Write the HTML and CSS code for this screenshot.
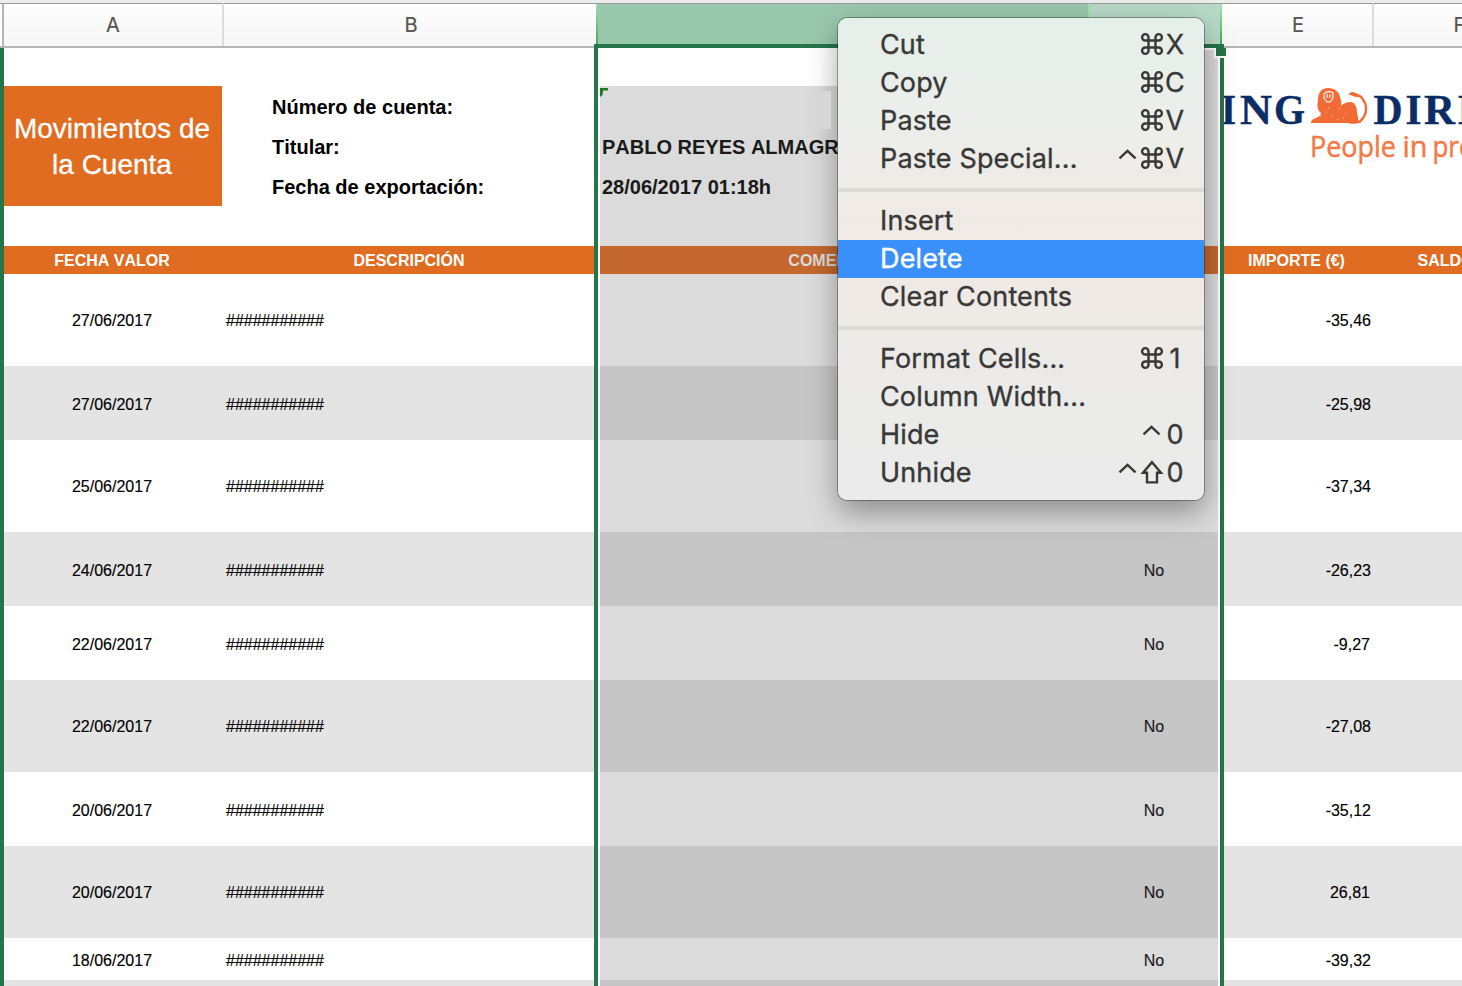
FILE: index.html
```
<!DOCTYPE html>
<html lang="es">
<head>
<meta charset="utf-8">
<title>Movimientos de la Cuenta</title>
<link rel="stylesheet" href="styles.css">
</head>
<body>
<svg class="defs" width="0" height="0" aria-hidden="true">
  <symbol id="cmd" viewBox="0 0 24 24"><path d="M8.5 8.5h7v7h-7zM8.5 8.5H5.3A3.2 3.2 0 1 1 8.5 5.3zM15.5 8.5V5.3a3.2 3.2 0 1 1 3.2 3.2zM15.5 15.5h3.2a3.2 3.2 0 1 1-3.2 3.2zM8.5 15.5v3.2a3.2 3.2 0 1 1-3.2-3.2z"/></symbol>
  <symbol id="ctrl" viewBox="0 0 24 24"><path d="M3.5 12.4L11.5 4.8L19.5 12.4"/></symbol>
  <symbol id="shift" viewBox="0 0 24 24"><path d="M12 2.2L21 12.8H17V22.4H7V12.8H3Z"/></symbol>
</svg>
<div class="sheet">
  <div class="colheads">
    <div class="corner"></div>
    <div class="ch ch-a">A</div>
    <div class="ch ch-b">B</div>
    <div class="ch ch-c"></div>
    <div class="ch ch-d"></div>
    <div class="ch ch-e">E</div>
    <div class="ch ch-f">F</div>
  </div>
  <div class="top cols">
    <div class="title">Movimientos de<br>la Cuenta</div>
    <div class="labels"><span>Número de cuenta:</span><span>Titular:</span><span>Fecha de exportación:</span></div>
    <div class="topsel">
      <div class="owner"><i class="flag"></i><span>&nbsp;</span><span>PABLO REYES ALMAGRO</span><span>28/06/2017 01:18h</span></div>
      <div class="topd"></div>
    </div>
    <svg class="logo" width="240" height="198" viewBox="1222 48 240 198">
      <g class="brand">
        <text x="1221" y="123.5" textLength="15" lengthAdjust="spacingAndGlyphs">I</text>
        <text x="1240" y="123.5" textLength="32" lengthAdjust="spacingAndGlyphs">N</text>
        <text x="1274" y="123.5" textLength="31" lengthAdjust="spacingAndGlyphs">G</text>
        <text x="1373.5" y="123.5" textLength="29" lengthAdjust="spacingAndGlyphs">D</text>
        <text x="1405.5" y="123.5" textLength="16" lengthAdjust="spacingAndGlyphs">I</text>
        <text x="1424" y="123.5" textLength="31" lengthAdjust="spacingAndGlyphs">R</text>
        <text x="1458" y="123.5" textLength="27" lengthAdjust="spacingAndGlyphs">E</text>
      </g>
      <path class="lion" d="M1311 123c0-3 2-4 5-5 3-1 5-3 5-5-4-3-4-8-3-13 0-8 4-12 10-12 7 0 11 4 12 9 1 3 2 6 1 9 3-3 6-4 9-4 5 0 7 5 7 10 0 3 2 6 1 9h3v2z"/>
      <path class="tail" d="M1353 94.500c5 0 8 1 10 5 4 5 4 12 1 17-2 4-5 6-9 6h-5"/>
      <path class="tuft" d="M1349 95c0-3 4-4 6-2l5 3-3 1c-3 0-5-2-8-2z"/>
      <path class="face" d="M1324 94c2-3 7-3 9-1v5l-3 4h-3l-3-4zM1327 94v4M1330 94v4"/>
      <path class="mane" d="M1320 116h2M1325 112h2M1331 117l2-1M1338 109l2-1M1337 119h2M1345 113l2 1M1342 118h2M1328 108h2"/>
      <text class="tag" x="1310" y="157" textLength="86" lengthAdjust="spacingAndGlyphs">People</text>
      <text class="tag" x="1402.5" y="157" textLength="25" lengthAdjust="spacingAndGlyphs">in</text>
      <text class="tag" x="1432.5" y="157" textLength="42" lengthAdjust="spacingAndGlyphs">pro</text>
    </svg>
  </div>
  <div class="heading cols"><div>FECHA VALOR</div><div>DESCRIPCIÓN</div><div class="sel"><b class="com">COMENTARIO</b><b></b></div><div class="imp">IMPORTE (€)</div><div class="saldo">SALDO (€)</div></div>
  <div class="row h92 cols"><div>27/06/2017</div><div class="desc">###########</div><div class="sel"><span></span><span>No</span></div><div class="amt">-35,46</div><div></div></div>
  <div class="row h74 alt cols"><div>27/06/2017</div><div class="desc">###########</div><div class="sel"><span></span><span>No</span></div><div class="amt">-25,98</div><div></div></div>
  <div class="row h92 cols"><div>25/06/2017</div><div class="desc">###########</div><div class="sel"><span></span><span>No</span></div><div class="amt">-37,34</div><div></div></div>
  <div class="row h74 alt cols"><div>24/06/2017</div><div class="desc">###########</div><div class="sel"><span></span><span>No</span></div><div class="amt">-26,23</div><div></div></div>
  <div class="row h74 cols"><div>22/06/2017</div><div class="desc">###########</div><div class="sel"><span></span><span>No</span></div><div class="amt pos">-9,27</div><div></div></div>
  <div class="row h92 alt cols"><div>22/06/2017</div><div class="desc">###########</div><div class="sel"><span></span><span>No</span></div><div class="amt">-27,08</div><div></div></div>
  <div class="row h74 cols"><div>20/06/2017</div><div class="desc">###########</div><div class="sel"><span></span><span>No</span></div><div class="amt">-35,12</div><div></div></div>
  <div class="row h92 alt cols"><div>20/06/2017</div><div class="desc">###########</div><div class="sel"><span></span><span>No</span></div><div class="amt pos">26,81</div><div></div></div>
  <div class="row h42 cols"><div>18/06/2017</div><div class="desc">###########</div><div class="sel"><span></span><span>No</span></div><div class="amt">-39,32</div><div></div></div>
  <div class="row h6 alt cols"><div></div><div></div><div class="sel"></div><div></div><div></div></div>

  <div class="edge"></div>
  <div class="selection"></div>
  <div class="handle"></div>
  <div class="menu">
    <div class="item"><span>Cut</span><kbd><svg><use href="#cmd"/></svg><em>X</em></kbd></div>
    <div class="item"><span>Copy</span><kbd><svg><use href="#cmd"/></svg><em>C</em></kbd></div>
    <div class="item"><span>Paste</span><kbd><svg><use href="#cmd"/></svg><em>V</em></kbd></div>
    <div class="item"><span>Paste Special...</span><kbd><svg><use href="#ctrl"/></svg><svg><use href="#cmd"/></svg><em>V</em></kbd></div>
    <hr>
    <div class="item"><span>Insert</span></div>
    <div class="item active"><span>Delete</span></div>
    <div class="item"><span>Clear Contents</span></div>
    <hr>
    <div class="item"><span>Format Cells...</span><kbd><svg><use href="#cmd"/></svg><em>1</em></kbd></div>
    <div class="item"><span>Column Width...</span></div>
    <div class="item"><span>Hide</span><kbd><svg><use href="#ctrl"/></svg><em>0</em></kbd></div>
    <div class="item"><span>Unhide</span><kbd><svg><use href="#ctrl"/></svg><svg><use href="#shift"/></svg><em>0</em></kbd></div>
  </div>
  <div class="patch"></div>
</div>
</body>
</html>
```
FILE: styles.css
```
* { box-sizing: border-box; }
body { margin: 0; background: #fff; font-family: "Liberation Sans", Arial, sans-serif; font-kerning: none; overflow: hidden; }
.defs { position: absolute; }
.sheet { position: relative; width: 1462px; height: 986px; overflow: hidden; }

.colheads { display: flex; height: 48px; border-top: 3px solid #ececec; border-bottom: 2px solid #b5b5b5; background: linear-gradient(#999 1px, #fdfdfd 1px, #f6f6f6); }
.corner { flex: none; width: 4px; background: #fff; border-right: 2px solid #b5b5b5; border-top: 1px solid #999; }
.ch { flex: none; height: 43px; border-top: 1px solid #999; border-right: 2px solid #dcdcdc; font: 20px/42px "Inter", sans-serif; color: #555; text-align: center; -webkit-text-stroke: .2px; }
.ch-a { width: 220px; }
.ch-b { width: 374px; border-right: 0; }
.ch-c { width: 494px; border-right-color: #9fdfae; background: linear-gradient(90deg, transparent 2px, #9ac8ad 2px), linear-gradient(#a5dcb0, #3da850); margin-left: -2px; }
.ch-d { width: 132px; border-right: 0; background: linear-gradient(90deg, #b8d9c8 130px, transparent 130px), linear-gradient(#a5e6ae, #3da850); }
.ch-e { width: 152px; padding-left: 2px; }
.ch-f { width: 173px; }

.cols { display: grid; grid-template-columns: 218px 376px 626px 150px 92px; padding-left: 4px; }
.cols > .sel { margin: 0 4px 0 2px; }
.top { height: 198px; grid-template-columns: 218px 376px 620px 244px; }
.title { margin-top: 38px; height: 120px; padding: 25px 2px 0 0; background: #e06c22; color: #fff; font-size: 28px; line-height: 36px; text-align: center; -webkit-text-stroke: .3px; }
.labels { display: flex; flex-direction: column; padding: 39px 0 0 50px; font-weight: bold; font-size: 20px; line-height: 40px; color: #000; }
.topsel { display: flex; margin: 0 0 0 2px; width: 618px; }
.owner { position: relative; width: 490px; margin-top: 38px; background: #dbdbdb; padding: 1px 2px; display: flex; flex-direction: column; font-weight: bold; font-size: 20px; line-height: 40px; color: #1a1a1a; }
.flag { position: absolute; left: 0; top: 2px; width: 8px; height: 9px; background: #1f7a25; clip-path: polygon(0 0, 100% 0, 100% 28%, 40% 28%, 30% 80%, 0 100%); }
.topd { width: 128px; margin-top: 2px; background: #dbdbdb; }
.logo { margin-left: 4px; }
.brand { font: bold 42px "Liberation Serif", serif; fill: #0c2c66; stroke: #0c2c66; stroke-width: .4; }
.lion, .tuft { fill: #f26a35; }
.tail { fill: none; stroke: #f26a35; stroke-width: 2.4; }
.face { fill: none; stroke: #fff; stroke-width: 1.1; }
.mane { fill: none; stroke: #f9a783; stroke-width: 1; }
.tag { font: 29px "Open Sans", sans-serif; fill: #f27a48; stroke: #f27a48; stroke-width: .5; }

.heading { height: 28px; background: #e06c22; color: #fff; font: bold 16px/29px "Liberation Sans", sans-serif; font-kerning: none; text-align: center; }
.sel { display: grid; grid-template-columns: 490px 128px; }
.heading .sel { background: #c4682f; color: #dbdbdb; }
.heading .com { padding-right: 4px; }
.heading .imp { padding-right: 5px; }
.heading > div:nth-child(1) { padding-right: 2px; }
.heading > div:nth-child(2) { padding-right: 2px; }
.heading .saldo { text-align: left; padding-left: 43.5px; white-space: nowrap; }
.row { font-size: 16px; color: #000; text-align: center; -webkit-text-stroke: .15px; }
.row > div:first-child { padding-right: 2px; }
.row.alt { background: #e4e4e4; }
.row .sel { background: #dbdbdb; color: #1a1a1a; }
.row.alt .sel { background: #c6c6c6; }
.row .desc { text-align: left; padding-left: 4px; }
.row .amt { text-align: right; padding-right: 3px; }
.row .pos { padding-right: 4px; }
.h92 { height: 92px; line-height: 93px; }
.h74 { height: 74px; line-height: 77px; }
.h42 { height: 42px; line-height: 45px; }
.h6 { height: 6px; }

.edge { position: absolute; left: 0; top: 48px; width: 4px; height: 938px; background: #26744a; }
.selection { position: absolute; left: 594px; top: 44px; width: 630px; height: 950px; border: 4px solid #26744a; box-shadow: inset 2px 0 #fff, inset -2px 0 #fff; }
.handle { position: absolute; left: 1216px; top: 48px; width: 10px; height: 8px; background: #26744a; box-shadow: -2px 2px #fff, 0 2px #fff; }

.menu { position: absolute; left: 838px; top: 18px; width: 366px; height: 482px; padding: 8px 0; border-radius: 9px; overflow: visible; color: #383836; background: linear-gradient(#e5efe9 0, #eceeeb 100px, #efebe7 180px, #f1e9e5 230px, #eeeae6 300px, #ebebea 380px, #ebebeb); box-shadow: 0 0 0 1px rgba(0,0,0,.32), 0 12px 30px rgba(0,0,0,.36); }
.item { display: flex; justify-content: space-between; height: 38px; padding: 0 18px 0 42px; font: 27px/37px "Inter", sans-serif; letter-spacing: .15px; -webkit-text-stroke: .35px; }
.item.active { background: #3a90fb; color: #fff; }
.menu hr { height: 4px; margin: 10px 0; border: 0; background: #dddad7; }
kbd { display: flex; align-items: center; height: 36px; font: inherit; }
kbd svg { width: 24px; height: 24px; fill: none; stroke: #383836; stroke-width: 2.4; }
kbd em { width: 22px; line-height: 36px; padding-top: 2px; text-align: center; font-style: normal; }
.patch { position: absolute; left: 810px; top: 91px; width: 21px; height: 38px; background: linear-gradient(90deg, transparent, #dbdbdb); }
```
